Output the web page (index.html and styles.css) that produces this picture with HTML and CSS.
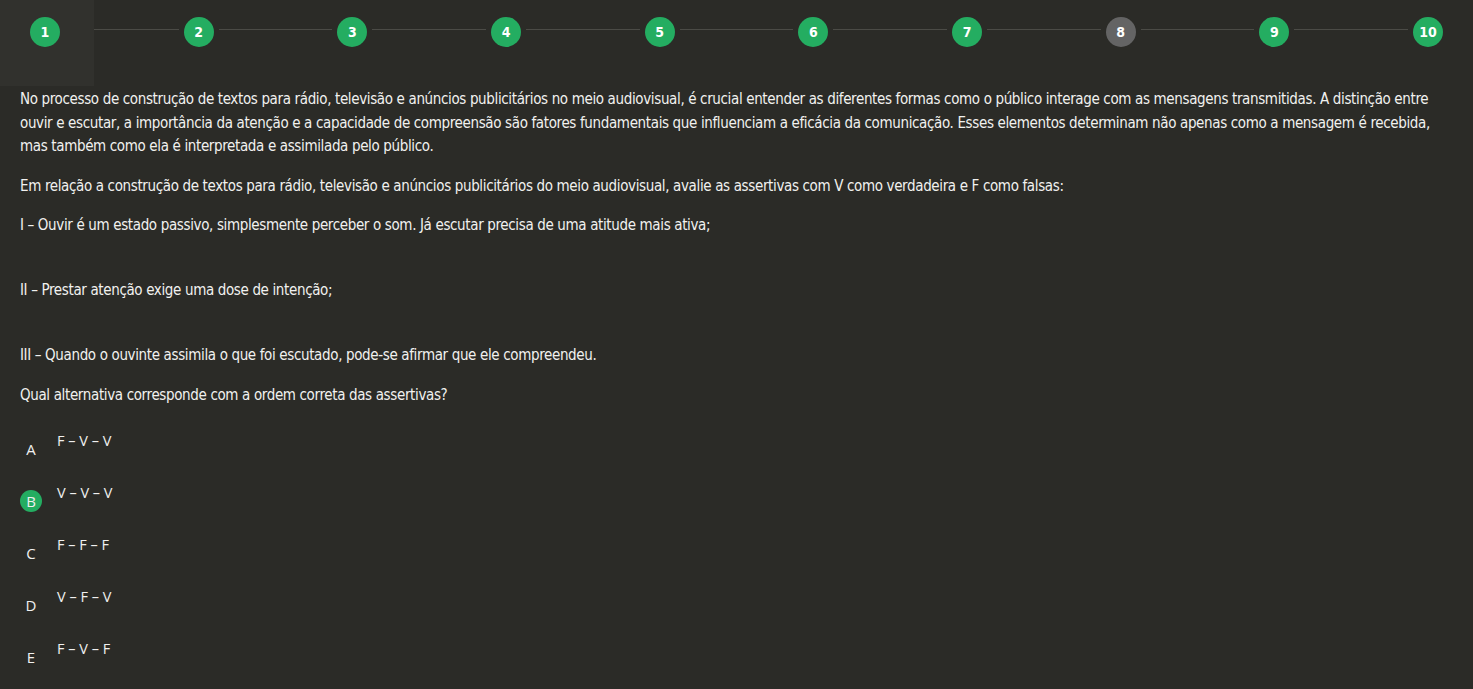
FILE: index.html
```html
<!DOCTYPE html>
<html lang="pt">
<head>
<meta charset="utf-8">
<title>Questão</title>
<link rel="stylesheet" href="styles.css">
</head>
<body>
<nav class="stepper">
  <div class="step done current"><span class="dot">1</span></div>
  <div class="line"></div>
  <div class="step done"><span class="dot">2</span></div>
  <div class="line"></div>
  <div class="step done"><span class="dot">3</span></div>
  <div class="line"></div>
  <div class="step done"><span class="dot">4</span></div>
  <div class="line"></div>
  <div class="step done"><span class="dot">5</span></div>
  <div class="line"></div>
  <div class="step done"><span class="dot">6</span></div>
  <div class="line"></div>
  <div class="step done"><span class="dot">7</span></div>
  <div class="line"></div>
  <div class="step pending"><span class="dot">8</span></div>
  <div class="line"></div>
  <div class="step done"><span class="dot">9</span></div>
  <div class="line"></div>
  <div class="step done"><span class="dot">10</span></div>
</nav>
<main class="question">
  <p>No processo de construção de textos para rádio, televisão e anúncios publicitários no meio audiovisual, é crucial entender as diferentes formas como o público interage com as mensagens transmitidas. A distinção entre ouvir e escutar, a importância da atenção e a capacidade de compreensão são fatores fundamentais que influenciam a eficácia da comunicação. Esses elementos determinam não apenas como a mensagem é recebida, mas também como ela é interpretada e assimilada pelo público.</p>
  <p>Em relação a construção de textos para rádio, televisão e anúncios publicitários do meio audiovisual, avalie as assertivas com V como verdadeira e F como falsas:</p>
  <p class="gap">I – Ouvir é um estado passivo, simplesmente perceber o som. Já escutar precisa de uma atitude mais ativa;</p>
  <p class="gap">II – Prestar atenção exige uma dose de intenção;</p>
  <p>III – Quando o ouvinte assimila o que foi escutado, pode-se afirmar que ele compreendeu.</p>
  <p>Qual alternativa corresponde com a ordem correta das assertivas?</p>
  <ul class="options">
    <li class="option"><span class="letter">A</span><span class="answer">F – V – V</span></li>
    <li class="option selected"><span class="letter">B</span><span class="answer">V – V – V</span></li>
    <li class="option"><span class="letter">C</span><span class="answer">F – F – F</span></li>
    <li class="option"><span class="letter">D</span><span class="answer">V – F – V</span></li>
    <li class="option"><span class="letter">E</span><span class="answer">F – V – F</span></li>
  </ul>
</main>
</body>
</html>
```
FILE: styles.css
```css
html, body {
  margin: 0;
  padding: 0;
  background: #2b2b27;
  color: #f3f3f3;
}
body {
  font-family: "DejaVu Sans Condensed", "DejaVu Sans", sans-serif;
  height: 689px;
  overflow: hidden;
}
.stepper {
  display: flex;
  align-items: center;
  padding: 17px 30px 0 30px;
  height: 30px;
}
.step {
  position: relative;
  flex: 0 0 30px;
  height: 30px;
}
.step.current::before {
  content: "";
  position: absolute;
  left: -30px;
  top: -17px;
  width: 94px;
  height: 86px;
  background: #31312d;
}
.dot {
  position: relative;
  display: flex;
  align-items: center;
  justify-content: center;
  width: 30px;
  height: 30px;
  border-radius: 50%;
  font-family: "DejaVu Sans Condensed", "DejaVu Sans", sans-serif;
  font-weight: bold;
  font-size: 14px;
  color: #ffffff;
}
.done .dot { background: #24ad61; }
.pending .dot { background: #646464; }
.line {
  flex: 1 1 auto;
  height: 1px;
  margin: 0 5px 5px;
  background: #4b4b46;
}
.question {
  padding: 41px 20px 0 20px;
}
.question p {
  margin: 0 0 16px;
  font-size: 15px;
  line-height: 23.5px;
  letter-spacing: -0.36px;
  color: #f1f1ef;
}
.question p.gap {
  margin-bottom: 41.5px;
}
.options {
  list-style: none;
  margin: 23px 0 0;
  padding: 0;
}
.option {
  display: flex;
  align-items: flex-start;
  height: 52px;
}
.letter {
  display: flex;
  align-items: center;
  justify-content: center;
  width: 22px;
  height: 22px;
  margin-top: 8px;
  border-radius: 50%;
  font-family: "Open Sans", sans-serif;
  font-size: 15px;
  color: #f0f0f0;
}
.selected .letter {
  background: #24ad61;
}
.answer {
  margin-left: 15px;
  font-family: "Open Sans", sans-serif;
  font-size: 14.5px;
  line-height: 22px;
  color: #f0f0f0;
}
```
